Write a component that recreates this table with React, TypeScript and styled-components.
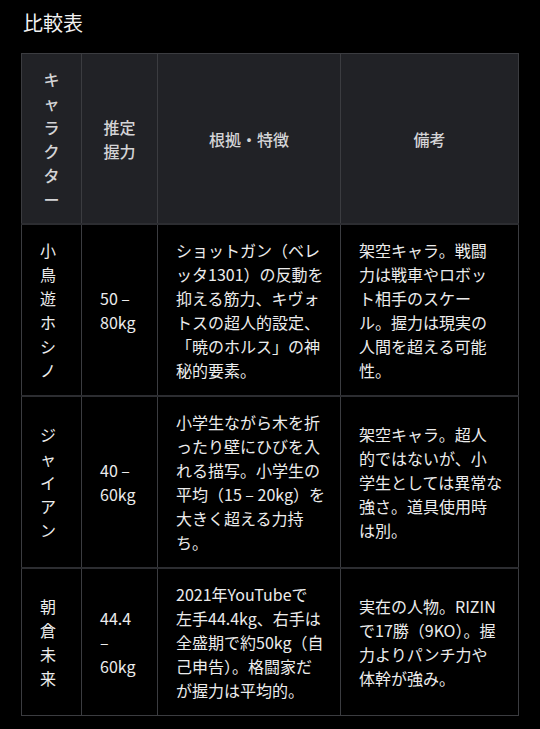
import React from 'react';
import styled, { createGlobalStyle } from 'styled-components';

const GlobalStyle = createGlobalStyle`
    html, body {
        margin: 0;
        padding: 0;
        background: #000;
    }
    body {
        font-family: 'Noto Sans CJK JP', 'Noto Sans', sans-serif;
        color: #ececec;
    }
`;

// 行の区切りは元の表示に合わせて持たせておく
type Row = {
    name: string;
    grip: string[];
    basis: string[];
    note: string[];
};

const rows: Row[] = [
    {
        name: '小鳥遊ホシノ',
        grip: ['50 –', '80kg'],
        basis: [
            'ショットガン（ベレ',
            'ッタ1301）の反動を',
            '抑える筋力、キヴォ',
            'トスの超人的設定、',
            '「暁のホルス」の神',
            '秘的要素。',
        ],
        note: [
            '架空キャラ。戦闘',
            '力は戦車やロボッ',
            'ト相手のスケー',
            'ル。握力は現実の',
            '人間を超える可能',
            '性。',
        ],
    },
    {
        name: 'ジャイアン',
        grip: ['40 –', '60kg'],
        basis: [
            '小学生ながら木を折',
            'ったり壁にひびを入',
            'れる描写。小学生の',
            '平均（15 – 20kg）を',
            '大きく超える力持',
            'ち。',
        ],
        note: [
            '架空キャラ。超人',
            '的ではないが、小',
            '学生としては異常な',
            '強さ。道具使用時',
            'は別。',
        ],
    },
    {
        name: '朝倉未来',
        grip: ['44.4', '–', '60kg'],
        basis: [
            '2021年YouTubeで',
            '左手44.4kg、右手は',
            '全盛期で約50kg（自',
            '己申告）。格闘家だ',
            'が握力は平均的。',
        ],
        note: [
            '実在の人物。RIZIN',
            'で17勝（9KO）。握',
            '力よりパンチ力や',
            '体幹が強み。',
        ],
    },
];

const Lines = ({ items }: { items: string[] }) => (
    <>
        {items.map((t, i) => (
            <Line key={i}>{t}</Line>
        ))}
    </>
);

export default function App() {
    return (
        <>
            <GlobalStyle />
            <Page>
                <Title>比較表</Title>
                <Table>
                    <colgroup>
                        <col style={{ width: 60 }} />
                        <col style={{ width: 76 }} />
                        <col style={{ width: 183 }} />
                        <col />
                    </colgroup>
                    <thead>
                        <tr>
                            <HeadCell>キャラクター</HeadCell>
                            <HeadCell>推定握力</HeadCell>
                            <HeadCell>根拠・特徴</HeadCell>
                            <HeadCell>備考</HeadCell>
                        </tr>
                    </thead>
                    <tbody>
                        {rows.map((r) => (
                            <BodyRow key={r.name}>
                                <Cell align="middle">{r.name}</Cell>
                                <Cell align="middle">
                                    <Lines items={r.grip} />
                                </Cell>
                                <Cell align="top">
                                    <Lines items={r.basis} />
                                </Cell>
                                <Cell align="middle">
                                    <Lines items={r.note} />
                                </Cell>
                            </BodyRow>
                        ))}
                    </tbody>
                </Table>
            </Page>
        </>
    );
}

const Page = styled.main`
    padding: 10px 21px 16px;
`;

const Title = styled.h2`
    margin: 0 0 17px 2px;
    font-size: 20px;
    line-height: 26px;
    font-weight: 400;
    color: #f2f2f2;
`;

const Table = styled.table`
    width: 100%;
    border-collapse: collapse;
    table-layout: fixed;
    border: 1px solid #3b3c40;
    font-size: 16px;
    line-height: 24px;
`;

const HeadCell = styled.th`
    background: #212226;
    color: #d4d4d6;
    font-weight: 500;
    text-align: center;
    vertical-align: middle;
    padding: 13px 18px 12px;
    border: 1px solid #3b3c40;
    border-bottom: 2px solid #2c2d31;
`;

const BodyRow = styled.tr`
    border-bottom: 2px solid #2c2d31;

    &:last-child {
        border-bottom: 1px solid #3b3c40;
    }
`;

const Cell = styled.td<{ align: 'top' | 'middle' }>`
    vertical-align: ${({ align }) => align};
    text-align: left;
    padding: 13px 18px;
    border-left: 1px solid #3b3c40;
    border-right: 1px solid #3b3c40;
    background: #000;
    color: #ececec;
`;

const Line = styled.span`
    display: block;
    white-space: nowrap;
`;
